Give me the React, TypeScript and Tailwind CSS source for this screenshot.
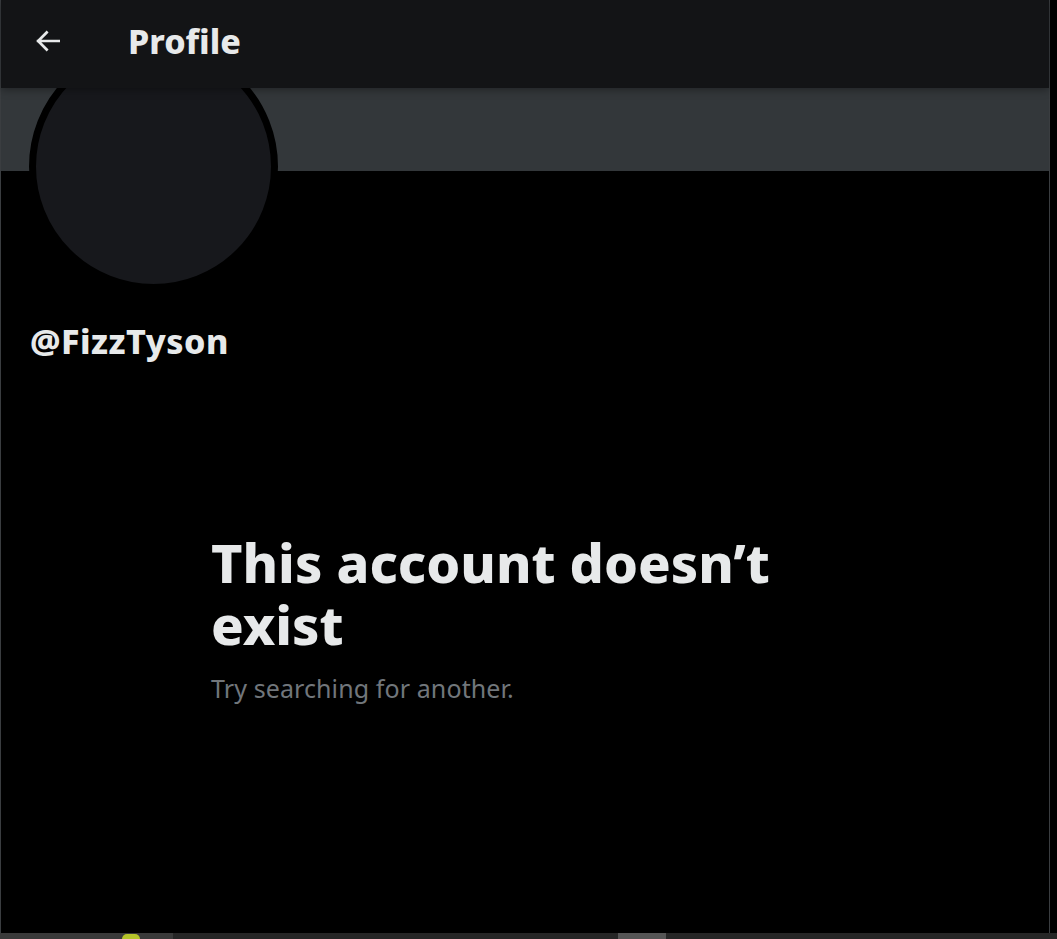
import React from "react";

export default function App() {
  const font = { fontFamily: '"Noto Sans", "Liberation Sans", sans-serif' };
  return (
    <div className="w-[1057px] h-[939px] bg-black flex flex-col overflow-hidden" style={font}>
      <div className="flex-1 flex">
        <div className="w-[1050px] border-l border-r border-[#3a3d40] flex flex-col">
          <div className="relative z-10 h-[88px] bg-[#131416] flex items-start pt-[19px] shadow-[0_2px_8px_rgba(0,0,0,0.35)]">
            <div className="w-[127px] h-[44px] flex items-center pl-[31px]">
              <svg width="32" height="32" viewBox="0 0 24 24" fill="none" stroke="#e7e9ea" strokeWidth="2" strokeLinecap="square">
                <path d="M20 12H4.6M11 5.6L4.6 12l6.4 6.4" />
              </svg>
            </div>
            <span className="text-[34px] font-extrabold text-[#e7e9ea] leading-[44px] tracking-[0px]">Profile</span>
          </div>
          <div className="relative h-[83px] bg-[#33373a]">
            <div className="absolute left-[28px] top-[-46px] w-[249px] h-[249px] rounded-full bg-[#17181c] border-[7px] border-black" />
          </div>
          <div className="pl-[29px] pt-[150px]">
            <div className="text-[34px] font-extrabold text-[#e7e9ea] leading-[40px] tracking-[0.5px]">@FizzTyson</div>
          </div>
          <div className="pl-[210px] pt-[170px]">
            <div className="text-[54px] font-extrabold text-[#e7e9ea] leading-[62px] w-[620px] tracking-[0px]">
              This account doesn’t exist
            </div>
            <div className="mt-[17px] text-[25px] text-[#71767b] leading-[32px] tracking-[0.1px]">Try searching for another.</div>
          </div>
        </div>
      </div>
      <div className="h-[6px] bg-[#262626] flex">
        <div className="w-[173px] h-full bg-[#3a3a3a] relative">
          <div className="absolute left-[122px] top-[1px] w-[18px] h-[5px] rounded-t-full bg-[#b5c42a]" />
        </div>
        <div className="w-[445px]" />
        <div className="w-[48px] h-full bg-[#555555]" />
      </div>
    </div>
  );
}
